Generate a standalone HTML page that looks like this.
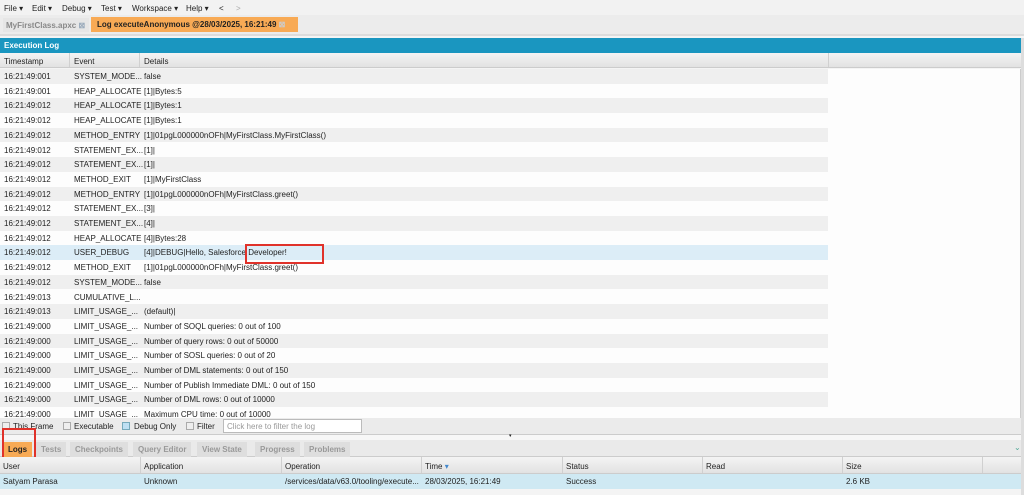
<!DOCTYPE html>
<html><head><style>
*{box-sizing:border-box;margin:0;padding:0}
body{width:1024px;height:495px;overflow:hidden;background:#f4f4f4;font-family:"Liberation Sans",sans-serif;font-size:8px;color:#222;position:relative}
.abs{position:absolute;white-space:nowrap}
.menu{top:0;left:0;width:1024px;height:15px;background:#f2f2f2}
.menu span{position:absolute;top:4px;font-size:8px}
.tabs{top:15px;left:0;width:1024px;height:21px;background:#ececec;border-bottom:2px solid #dcdcdc}
.t1{left:3px;top:18px;width:86px;height:14px;background:#e6e6e6;color:#888;font-weight:bold;padding:3px 3px}
.t2{left:91px;top:17px;width:207px;height:15px;background:#f8aa55;font-weight:bold;padding:3px 6px;color:#222}
.blue{top:38px;left:0;width:1021px;height:15px;background:#1a96c0;color:#fff;font-weight:bold;padding:3px 4px}
.hdr{top:53px;left:0;width:1021px;height:15px;background:linear-gradient(#f4f4f4,#e2e2e2);border-bottom:1px solid #ccc}
.hdr span{position:absolute;top:4px}
.rows{top:69px;left:0;width:1021px;height:349px;background:#fdfdfd;border-right:1px solid #ccc}
.r{position:absolute;left:0;width:828px;height:14.7px}
.r span{position:absolute;top:3px;white-space:nowrap}
.filt{top:418px;left:0;width:1021px;height:16px;background:#ebebeb}
.cb{position:absolute;top:4px;width:8px;height:8px;border:1px solid #aaa;background:#eee}
.split{top:434px;left:0;width:1024px;height:6px;background:#f7f7f7;border-top:1px solid #ccc}
.btabs{top:440px;left:0;width:1024px;height:17px;background:#eaeaea;border-bottom:1px solid #ccc}
.bt{position:absolute;top:2px;height:15px;background:#dedede;color:#999;font-weight:bold;padding:3px 5px}
.ghdr{top:457px;left:0;width:1021px;height:17px;background:linear-gradient(#f4f4f4,#e2e2e2);border-bottom:1px solid #ccc}
.ghdr span,.grow span{position:absolute;top:5px}
.grow{top:474px;left:0;width:1021px;height:15px;background:#cfe9f3}
.grow span{top:3px}
.vl{position:absolute;top:0;bottom:0;width:1px;background:#d0d0d0}
</style></head><body>
<div class="abs menu">
<span style="left:4px">File ▾</span><span style="left:32px">Edit ▾</span><span style="left:62px">Debug ▾</span><span style="left:101px">Test ▾</span><span style="left:132px">Workspace ▾</span><span style="left:186px">Help ▾</span><span style="left:219px">&lt;</span><span style="left:236px;color:#aaa">&gt;</span>
</div>
<div class="abs tabs"></div>
<div class="abs t1">MyFirstClass.apxc <span style="color:#9ab">⊠</span></div>
<div class="abs t2">Log executeAnonymous @28/03/2025, 16:21:49 <span style="color:#ccc">⊠</span></div>
<div class="abs blue">Execution Log</div>
<div class="abs hdr"><span style="left:4px">Timestamp</span><span style="left:74px">Event</span><span style="left:144px">Details</span>
<div class="vl" style="left:69px"></div><div class="vl" style="left:139px"></div><div class="vl" style="left:828px"></div></div>
<div class="abs rows" id="rows"></div>
<div class="abs" style="left:245px;top:244px;width:79px;height:20px;border:2px solid #e0322a"></div>
<div class="abs filt">
<div class="cb" style="left:2px"></div><span class="abs" style="left:13px;top:4px">This Frame</span>
<div class="cb" style="left:63px"></div><span class="abs" style="left:74px;top:4px">Executable</span>
<div class="cb" style="left:122px;background:#bfe0f3;border-color:#7ab"></div><span class="abs" style="left:134px;top:4px">Debug Only</span>
<div class="cb" style="left:186px"></div><span class="abs" style="left:197px;top:4px">Filter</span>
<div class="abs" style="left:223px;top:1px;width:139px;height:14px;background:#fff;border:1px solid #bbb;color:#999;padding:2px 3px">Click here to filter the log</div>
</div>
<div class="abs split"><span class="abs" style="left:509px;top:-2px;font-size:5px">▾</span></div>
<div class="abs btabs">
<div class="bt" style="left:3px;background:#f8aa55;color:#222">Logs</div>
<div class="bt" style="left:36px">Tests</div>
<div class="bt" style="left:70px">Checkpoints</div>
<div class="bt" style="left:133px">Query Editor</div>
<div class="bt" style="left:197px">View State</div>
<div class="bt" style="left:255px">Progress</div>
<div class="bt" style="left:304px">Problems</div>
<span class="abs" style="left:1014px;top:3px;color:#5a9">⌄</span>
</div>
<div class="abs" style="left:2px;top:428px;width:34px;height:34px;border:2px solid #e0322a"></div>
<div class="abs ghdr">
<span style="left:3px">User</span><span style="left:144px">Application</span><span style="left:285px">Operation</span><span style="left:425px">Time <span style="color:#48c;position:static">▾</span></span><span style="left:566px">Status</span><span style="left:706px">Read</span><span style="left:846px">Size</span>
<div class="vl" style="left:140px"></div><div class="vl" style="left:281px"></div><div class="vl" style="left:421px"></div><div class="vl" style="left:562px"></div><div class="vl" style="left:702px"></div><div class="vl" style="left:842px"></div><div class="vl" style="left:982px"></div>
</div>
<div class="abs grow">
<span style="left:3px">Satyam Parasa</span><span style="left:144px">Unknown</span><span style="left:285px">/services/data/v63.0/tooling/execute...</span><span style="left:425px">28/03/2025, 16:21:49</span><span style="left:566px">Success</span><span style="left:846px">2.6 KB</span>
</div>
<div class="abs" style="left:1021px;top:38px;width:3px;height:457px;background:#ddd"></div>
<script>
var d=[["16:21:49:001","SYSTEM_MODE...","false"],["16:21:49:001","HEAP_ALLOCATE","[1]|Bytes:5"],["16:21:49:012","HEAP_ALLOCATE","[1]|Bytes:1"],["16:21:49:012","HEAP_ALLOCATE","[1]|Bytes:1"],["16:21:49:012","METHOD_ENTRY","[1]|01pgL000000nOFh|MyFirstClass.MyFirstClass()"],["16:21:49:012","STATEMENT_EX...","[1]|"],["16:21:49:012","STATEMENT_EX...","[1]|"],["16:21:49:012","METHOD_EXIT","[1]|MyFirstClass"],["16:21:49:012","METHOD_ENTRY","[1]|01pgL000000nOFh|MyFirstClass.greet()"],["16:21:49:012","STATEMENT_EX...","[3]|"],["16:21:49:012","STATEMENT_EX...","[4]|"],["16:21:49:012","HEAP_ALLOCATE","[4]|Bytes:28"],["16:21:49:012","USER_DEBUG","[4]|DEBUG|Hello, Salesforce Developer!"],["16:21:49:012","METHOD_EXIT","[1]|01pgL000000nOFh|MyFirstClass.greet()"],["16:21:49:012","SYSTEM_MODE...","false"],["16:21:49:013","CUMULATIVE_L...",""],["16:21:49:013","LIMIT_USAGE_...","(default)|"],["16:21:49:000","LIMIT_USAGE_...","Number of SOQL queries: 0 out of 100"],["16:21:49:000","LIMIT_USAGE_...","Number of query rows: 0 out of 50000"],["16:21:49:000","LIMIT_USAGE_...","Number of SOSL queries: 0 out of 20"],["16:21:49:000","LIMIT_USAGE_...","Number of DML statements: 0 out of 150"],["16:21:49:000","LIMIT_USAGE_...","Number of Publish Immediate DML: 0 out of 150"],["16:21:49:000","LIMIT_USAGE_...","Number of DML rows: 0 out of 10000"],["16:21:49:000","LIMIT_USAGE_...","Maximum CPU time: 0 out of 10000"]];
var h="";d.forEach(function(r,i){var bg=i==12?"#dcedf7":(i%2==0?"#efefef":"#fdfdfd");h+='<div class="r" style="top:'+(i*14.7)+'px;background:'+bg+'"><span style="left:4px">'+r[0]+'</span><span style="left:74px">'+r[1]+'</span><span style="left:144px">'+r[2]+'</span></div>';});
document.getElementById("rows").innerHTML=h;
</script>
</body></html>
